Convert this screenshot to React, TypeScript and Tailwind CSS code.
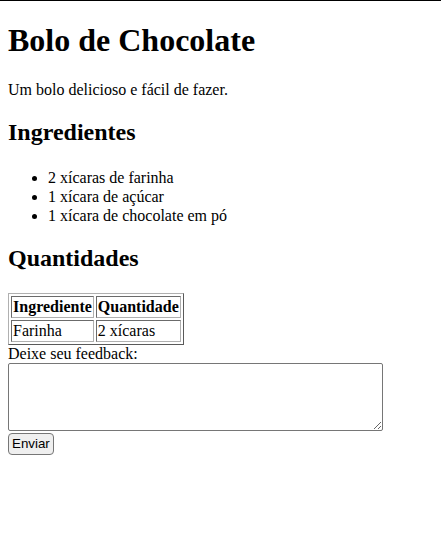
export default function App() {
  const rows = [{ name: "Farinha", amount: "2 xícaras" }];
  const cell =
    "border border-t-[#6b6b6b] border-l-[#6b6b6b] border-r-[#b0b0b0] border-b-[#b0b0b0] p-px text-left";

  return (
    <div className="min-h-[554px] border-t border-black bg-white px-2 pb-2 font-['Liberation_Serif',serif] text-base leading-[normal] text-black">
      <h1 className="my-[21.44px] text-[32px] font-bold leading-[normal]">Bolo de Chocolate</h1>
      <p className="my-4">Um bolo delicioso e fácil de fazer.</p>

      <h2 className="my-[19.92px] text-2xl font-bold leading-[normal]">Ingredientes</h2>
      <ul className="my-4 list-disc pt-[2px] pl-10">
        <li className="leading-[19px]">2 xícaras de farinha</li>
        <li className="leading-[19px]">1 xícara de açúcar</li>
        <li className="leading-[19px]">1 xícara de chocolate em pó</li>
      </ul>

      <h2 className="mt-[19.92px] mb-[21.5px] text-2xl font-bold leading-[normal]">Quantidades</h2>
      <table className="border-separate border-spacing-[2px] border border-t-[#b0b0b0] border-l-[#b0b0b0] border-r-[#5a5a5a] border-b-[#5a5a5a]">
        <thead>
          <tr>
            <th className={`${cell} font-bold`}>Ingrediente</th>
            <th className={`${cell} font-bold`}>Quantidade</th>
          </tr>
        </thead>
        <tbody>
          {rows.map((row) => (
            <tr key={row.name}>
              <td className={cell}>{row.name}</td>
              <td className={cell}>{row.amount}</td>
            </tr>
          ))}
        </tbody>
      </table>

      <form className="flex flex-col items-start">
        <label htmlFor="feedback">Deixe seu feedback:</label>
        <textarea
          id="feedback"
          className="h-[68px] w-[375px] rounded-[2px] border border-[#767676] bg-white p-0.5 font-['Liberation_Mono',monospace] text-[13.33px]"
        />
        <button
          type="button"
          className="mt-[2px] h-[22px] rounded-[4px] border border-[#767676] bg-[#efefef] px-[3px] font-['Liberation_Sans',sans-serif] text-[13.33px] leading-[18px]"
        >
          Enviar
        </button>
      </form>
    </div>
  );
}
